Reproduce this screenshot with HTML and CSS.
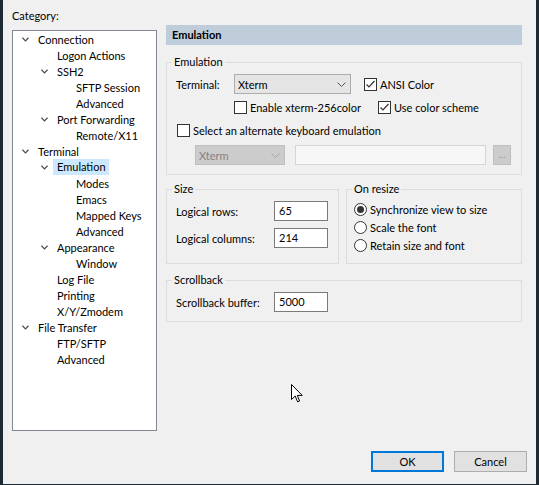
FILE: index.html
```html
<!DOCTYPE html>
<html>
	<head>
		<meta charset="UTF-8"/>
		<title>Session Options - Emulation</title>
		<link rel="stylesheet" href="styles.css">
	</head>
	<body>
		<div class="window">
			<div class="main">
				<div class="left">
					<div class="cat-label">Category:</div>
					<ul class="tree">
						<li class="lv0"><svg class="chev" viewBox="0 0 8 5"><polyline points="0.5,0.5 4,4 7.5,0.5"/></svg><span>Connection</span></li>
						<li class="lv1 leaf"><span>Logon Actions</span></li>
						<li class="lv1"><svg class="chev" viewBox="0 0 8 5"><polyline points="0.5,0.5 4,4 7.5,0.5"/></svg><span>SSH2</span></li>
						<li class="lv2 leaf"><span>SFTP Session</span></li>
						<li class="lv2 leaf"><span>Advanced</span></li>
						<li class="lv1"><svg class="chev" viewBox="0 0 8 5"><polyline points="0.5,0.5 4,4 7.5,0.5"/></svg><span>Port Forwarding</span></li>
						<li class="lv2 leaf"><span>Remote/X11</span></li>
						<li class="lv0"><svg class="chev" viewBox="0 0 8 5"><polyline points="0.5,0.5 4,4 7.5,0.5"/></svg><span>Terminal</span></li>
						<li class="lv1"><svg class="chev" viewBox="0 0 8 5"><polyline points="0.5,0.5 4,4 7.5,0.5"/></svg><span class="selected">Emulation</span></li>
						<li class="lv2 leaf"><span>Modes</span></li>
						<li class="lv2 leaf"><span>Emacs</span></li>
						<li class="lv2 leaf"><span>Mapped Keys</span></li>
						<li class="lv2 leaf"><span>Advanced</span></li>
						<li class="lv1"><svg class="chev" viewBox="0 0 8 5"><polyline points="0.5,0.5 4,4 7.5,0.5"/></svg><span>Appearance</span></li>
						<li class="lv2 leaf"><span>Window</span></li>
						<li class="lv1 leaf"><span>Log File</span></li>
						<li class="lv1 leaf"><span>Printing</span></li>
						<li class="lv1 leaf"><span>X/Y/Zmodem</span></li>
						<li class="lv0"><svg class="chev" viewBox="0 0 8 5"><polyline points="0.5,0.5 4,4 7.5,0.5"/></svg><span>File Transfer</span></li>
						<li class="lv1 leaf"><span>FTP/SFTP</span></li>
						<li class="lv1 leaf"><span>Advanced</span></li>
					</ul>
				</div>

				<div class="right">
					<div class="page-title">Emulation</div>

					<fieldset class="group">
						<legend>Emulation</legend>
						<div class="emu-row first">
							<span class="field-label term-label">Terminal:</span>
							<div class="combo term-combo"><span>Xterm</span><svg class="drop" viewBox="0 0 9 5"><polyline points="0.5,0.5 4.5,4.5 8.5,0.5"/></svg></div>
							<label class="check ansi"><span class="box checked"><svg viewBox="0 0 11 11"><polyline points="1.5,5.5 4,8 9.5,2"/></svg></span>ANSI Color</label>
						</div>
						<div class="emu-row second">
							<label class="check xterm256"><span class="box"></span>Enable xterm-256color</label>
							<label class="check"><span class="box checked"><svg viewBox="0 0 11 11"><polyline points="1.5,5.5 4,8 9.5,2"/></svg></span>Use color scheme</label>
						</div>
						<div class="emu-row third">
							<label class="check"><span class="box"></span>Select an alternate keyboard emulation</label>
						</div>
						<div class="emu-row fourth">
							<div class="combo disabled alt-combo"><span>Xterm</span><svg class="drop" viewBox="0 0 9 5"><polyline points="0.5,0.5 4.5,4.5 8.5,0.5"/></svg></div>
							<div class="textbox disabled alt-text"></div>
							<div class="dots-btn">...</div>
						</div>
					</fieldset>

					<div class="pair">
						<fieldset class="group size">
							<legend>Size</legend>
							<div class="input-row first">
								<span class="field-label size-label">Logical rows:</span>
								<div class="textbox">65</div>
							</div>
							<div class="input-row">
								<span class="field-label size-label">Logical columns:</span>
								<div class="textbox">214</div>
							</div>
						</fieldset>
						<fieldset class="group resize">
							<legend>On resize</legend>
							<div class="radios">
								<label class="radio"><span class="dot on"></span>Synchronize view to size</label>
								<label class="radio"><span class="dot"></span>Scale the font</label>
								<label class="radio"><span class="dot"></span>Retain size and font</label>
							</div>
						</fieldset>
					</div>

					<fieldset class="group scrollback">
						<legend>Scrollback</legend>
						<div class="input-row first">
							<span class="field-label size-label">Scrollback buffer:</span>
							<div class="textbox">5000</div>
						</div>
					</fieldset>
				</div>
			</div>

			<div class="buttons">
				<button class="btn default">OK</button>
				<button class="btn">Cancel</button>
			</div>

			<svg class="cursor" viewBox="0 0 12 19" width="12" height="19"><path d="M0.5,0.5 L0.5,15.5 L4.2,12 L6.6,17.8 L8.6,17 L6.3,11.4 L11.2,11.4 Z"/></svg>
		</div>
	</body>
</html>
```

FILE: styles.css
```css
body {
	margin: 0;
	background: #f0f0f0;
	font-family: "Segoe UI", Lato, sans-serif;
	font-size: 11px;
	color: #000;
}

.window {
	position: relative;
	box-sizing: border-box;
	width: 539px;
	height: 485px;
	border-left: 3px solid #1d2a33;
	border-right: 3px solid #1d2a33;
	border-bottom: 1px solid #1d2a33;
	display: flex;
	flex-direction: column;
}

.main {
	display: flex;
	gap: 9px;
	padding: 8px 0 0 9px;
}

/* category tree */
.left {
	width: 145px;
}

.cat-label {
	line-height: 16px;
	margin-bottom: 6px;
}

.tree {
	list-style: none;
	margin: 0;
	padding: 0;
	box-sizing: border-box;
	height: 401px;
	background: #fff;
	border: 1px solid #828790;
}

.tree li {
	display: flex;
	align-items: center;
	height: 16px;
	white-space: nowrap;
}

.tree .lv0 { padding-left: 9px; }
.tree .lv1 { padding-left: 28px; }
.tree .lv2 { padding-left: 47px; }
.tree .leaf span { margin-left: 16px; }

.chev {
	width: 7px;
	height: 5px;
	margin-right: 9px;
	fill: none;
	stroke: #4d4d4d;
	stroke-width: 1.4;
}

.tree .selected {
	background: #cce8ff;
	line-height: 16px;
	padding: 0 3px 0 4px;
	margin-left: -4px;
}

/* right side */
.right {
	width: 356px;
	margin-top: 17px;
}

.page-title {
	height: 20px;
	line-height: 20px;
	padding-left: 6px;
	background: #bfcddb;
	font-weight: bold;
}

.group {
	margin: 9px 0 0;
	padding: 0 9px 9px 9px;
	min-width: 0;
	border: 1px solid #dcdcdc;
}

.group legend {
	padding: 0 2px;
	margin-left: -4px;
	line-height: 16px;
}

.emu-row {
	display: flex;
	align-items: center;
}

.emu-row.first { margin-top: 4px; height: 20px; }
.emu-row.second { margin-top: 5px; height: 16px; padding-left: 58px; }
.emu-row.third { margin-top: 7px; height: 16px; padding-left: 1px; }
.emu-row.fourth { margin-top: 7px; height: 20px; padding-left: 19px; }

.term-label {
	width: 58px;
}

.combo {
	box-sizing: border-box;
	display: flex;
	align-items: center;
	justify-content: space-between;
	height: 20px;
	padding: 0 4px 0 3px;
	background: #e5e5e5;
	border: 1px solid #adadad;
}

.term-combo {
	width: 117px;
}

.drop {
	width: 9px;
	height: 5px;
	fill: none;
	stroke: #555;
	stroke-width: 1;
}

.combo.disabled {
	background: #cccccc;
	border-color: #bfbfbf;
	color: #838383;
}

.combo.disabled .drop {
	stroke: #a6a6a6;
}

.alt-combo {
	width: 90px;
}

.textbox {
	box-sizing: border-box;
	width: 54px;
	height: 20px;
	line-height: 18px;
	padding-left: 4px;
	background: #fff;
	border: 1px solid #7a7a7a;
}

.textbox.disabled {
	background: #f7f7f7;
	border-color: #d5d5d5;
}

.alt-text {
	width: 191px;
	margin-left: 10px;
}

.dots-btn {
	box-sizing: border-box;
	width: 18px;
	height: 20px;
	margin-left: 7px;
	line-height: 16px;
	text-align: center;
	font-size: 10px;
	color: #9a9a9a;
	background: #cccccc;
	border: 1px solid #bfbfbf;
}

/* checkboxes and radios */
.check, .radio {
	display: flex;
	align-items: center;
	white-space: nowrap;
}

.box {
	box-sizing: border-box;
	width: 13px;
	height: 13px;
	margin-right: 3px;
	background: #fff;
	border: 1px solid #333;
	display: flex;
	align-items: center;
	justify-content: center;
}

.box svg {
	width: 11px;
	height: 11px;
	fill: none;
	stroke: #333;
	stroke-width: 1.2;
}

.ansi {
	margin-left: 13px;
}

.xterm256 {
	width: 144px;
}

.pair {
	display: flex;
	gap: 7px;
	margin-top: 6px;
}

.pair .group {
	margin-top: 0;
}

.size {
	width: 173px;
	box-sizing: border-box;
	padding-bottom: 11px;
}

.resize {
	width: 176px;
	box-sizing: border-box;
}

.input-row {
	display: flex;
	align-items: center;
	margin-top: 7px;
}

.input-row.first {
	margin-top: 4px;
}

.size-label {
	width: 98px;
}

.radios {
	margin: 3px 0 0 -2px;
}

.radio {
	height: 18px;
}

.dot {
	box-sizing: border-box;
	width: 13px;
	height: 13px;
	margin-right: 3px;
	border: 1px solid #333;
	border-radius: 50%;
	background: #fff;
	display: flex;
	align-items: center;
	justify-content: center;
}

.dot.on::after {
	content: "";
	width: 7px;
	height: 7px;
	border-radius: 50%;
	background: #333;
}

.scrollback {
	margin-top: 8px;
}

/* bottom buttons */
.buttons {
	margin-top: auto;
	display: flex;
	justify-content: flex-end;
	gap: 10px;
	padding: 0 9px 12px 0;
}

.btn {
	box-sizing: border-box;
	width: 73px;
	height: 21px;
	padding: 0;
	font: inherit;
	color: #000;
	background: #e1e1e1;
	border: 1px solid #adadad;
}

.btn.default {
	border: 2px solid #0078d7;
}

.cursor {
	position: absolute;
	left: 288px;
	top: 384px;
	fill: #fff;
	stroke: #000;
	stroke-width: 1;
}
```
